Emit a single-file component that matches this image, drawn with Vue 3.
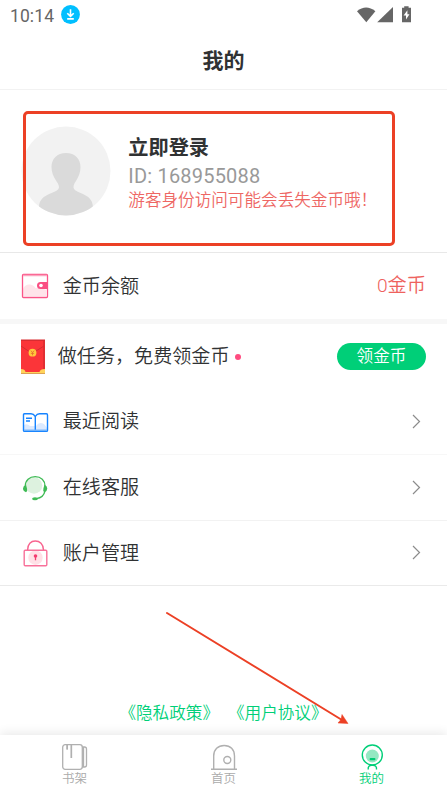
<script setup>
const menu = [
  { id: 'read', label: '最近阅读' },
  { id: 'service', label: '在线客服' },
  { id: 'account', label: '账户管理' },
]
</script>

<template>
  <div class="screen">
    <div class="status">
      <span class="time">10:14</span>
      <svg class="download" width="19" height="19" viewBox="0 0 19 19">
        <circle cx="9.5" cy="9.5" r="9.4" fill="#00bfff" />
        <path d="M9.5 4.2v7M6.3 8.2l3.2 3.2 3.2-3.2M6.2 13.9h6.6" fill="none" stroke="#fff" stroke-width="1.6" />
      </svg>
      <svg class="signals" width="56" height="18" viewBox="0 0 56 18" fill="#666">
        <path d="M0 5.3Q9 -2.2 18.4 5.3L9.3 16.2Z" />
        <path d="M20.2 16.2L36 .9v15.3Z" />
        <path d="M45 1.700h2.200V.200h4.400v1.500h2.400v14.500h-9Z" />
        <path d="M50.4 4.2l-3.8 5.2h2.4v4l3.5-5.2h-2.1Z" fill="#fff" />
      </svg>
    </div>
    <header class="title">我的</header>

    <section class="profile">
      <svg class="avatar" width="90" height="90" viewBox="0 0 90 90">
        <defs><clipPath id="face"><circle cx="45" cy="45" r="44.5" /></clipPath></defs>
        <circle cx="45" cy="45" r="44.5" fill="#f2f2f2" />
        <path clip-path="url(#face)" fill="#dadada" d="M45 27C54 27 59.500 33 59.500 41C59.500 52 52.500 56 52.500 61C52.500 68 71.500 66 72 81V90H18V81C18.500 66 38 68 38 61C38 56 30.500 52 30.500 41C30.500 33 36 27 45 27Z" />
      </svg>
      <div class="who">
        <div class="name">立即登录</div>
        <div class="uid">ID: 168955088</div>
        <div class="warn">游客身份访问可能会丢失金币哦！</div>
      </div>
      <div class="highlight"></div>
    </section>

    <section class="row balance">
      <svg class="icon" width="28" height="26" viewBox="0 0 28 26">
        <path d="M2 22V16Q4 11 9 11.500Q13 12 14.500 15Q20 14 25 17V23H2Z" fill="#ffe4ea" />
        <rect x="1.500" y="1.500" width="25" height="23" rx="1" fill="none" stroke="#fb5588" stroke-width="1.300" />
        <path d="M2 2.500H26" stroke="#fba5bf" stroke-width="1.500" />
        <path d="M26.500 9H19.500a3.500 3.500 0 0 0 0 7H26.500Z" fill="#fa4f83" />
        <circle cx="20" cy="12.500" r="1.800" fill="#fff" />
      </svg>
      <span class="label">金币余额</span>
      <span class="amount">0金币</span>
    </section>

    <section class="row task">
      <svg class="packet" width="26" height="36" viewBox="0 0 26 36">
        <rect x="1" y="1" width="24" height="33.500" rx="1" fill="#fb3539" />
        <path d="M24 1v33M1 1.200h24" stroke="#d92c30" stroke-width="1.500" />
        <path d="M1 7L12 14.500L24 7" fill="none" stroke="#d62b32" stroke-width="1" />
        <circle cx="12.500" cy="13.700" r="3.900" fill="#ffc83c" />
        <path d="M10.900 11.700l1.600 1.900 1.600-1.900M12.500 13.500v2.800M10.900 14.400h3.200" fill="none" stroke="#e46b2f" stroke-width=".8" />
        <path d="M1 30Q5 30 5.500 33H19.500Q20 30 25 30V35H1Z" fill="#ffd35b" />
        <path d="M1 34.500H25" stroke="#dca253" />
      </svg>
      <span class="label">做任务，免费领金币</span><i class="dot"></i>
      <button class="claim">领金币</button>
    </section>

    <section v-for="item in menu" :key="item.id" class="row menu-row" :class="item.id">
      <svg v-if="item.id === 'read'" class="icon" width="28" height="28" viewBox="0 0 28 28">
        <path d="M3 17Q6 15 9 18H15Q18 13 23 16L26 20V22H3Z" fill="#dceaff" />
        <path d="M14.300 8.500Q12.500 5.700 10 5.700H3.500Q2.500 5.700 2.500 7V22.500Q2.500 23.300 3.500 23.300H25.500Q26.500 23.300 26.500 22.500V7Q26.500 5.700 25.500 5.700H18.500Q16 5.700 14.300 8.500V22" fill="none" stroke="#1683ff" stroke-width="1.400" />
        <path d="M3 22.300H26" stroke="#70b3fb" stroke-width="1.500" />
        <path d="M5 10.200h6M5 13h4" stroke="#1683ff" stroke-width="1.500" />
      </svg>
      <svg v-else-if="item.id === 'service'" class="icon" width="28" height="28" viewBox="0 0 28 28">
        <circle cx="13" cy="11.500" r="8.300" fill="#ddf2df" />
        <path d="M4.300 12C4.300 6.500 8.400 2.700 14.200 2.700S24 6.500 24 12M24 17C23 21.500 20 24 15.500 24.700" fill="none" stroke="#3fbb55" stroke-width="1.300" />
        <path d="M5 10.700Q2 12 2 14.500Q2 17.200 5 18.200Q6.800 17 6 14.500ZM23.400 10.700Q26.300 12 26.300 14.500Q26.300 17.200 23.400 18.200Q21.600 17 22.400 14.500Z" fill="#3fbb55" />
        <ellipse cx="14" cy="24.700" rx="2.900" ry="1.500" fill="#3fbb55" />
      </svg>
      <svg v-else class="icon" width="28" height="28" viewBox="0 0 28 28">
        <circle cx="14.500" cy="18.700" r="7.200" fill="#ffe1e7" />
        <rect x="3.200" y="11.300" width="22.600" height="15.500" rx="1" fill="none" stroke="#f8719a" stroke-width="1.400" />
        <path d="M6.600 11C6.600 5 10 2 14.300 2S22.500 5 22.500 11" fill="none" stroke="#f8648f" stroke-width="1.400" />
        <circle cx="14.500" cy="17" r="1.800" fill="#f43c70" /><path d="M14.500 17v4.300" stroke="#f43c70" stroke-width="1.300" />
      </svg>
      <span class="label">{{ item.label }}</span>
      <svg class="chevron" width="9" height="16" viewBox="0 0 9 16"><path d="M1 1L7.500 7.500L1 14" fill="none" stroke="#8c8c8c" stroke-width="1.200" /></svg>
    </section>

    <div class="links"><span>《隐私政策》</span><span>《用户协议》</span></div>

    <nav class="tabs">
      <div class="tab">
        <svg width="28" height="28" viewBox="0 0 28 28" fill="none" stroke="#b0b0b0" stroke-width="1.300">
          <rect x="1.700" y="1.700" width="19.600" height="24.600" rx="2.500" />
          <path d="M21.300 4H23.500Q25.500 4 25.500 6V22Q25.500 24 23.500 24H21.300M22.500 4v20M6 2v4.500M10.200 2v13" />
          <path d="M6.300 2v4.500M10.500 2v13" />
        </svg>
        <span>书架</span>
      </div>
      <div class="tab">
        <svg width="28" height="28" viewBox="0 0 28 28" fill="none" stroke="#b0b0b0" stroke-width="1.400">
          <path d="M3.700 26V13C3.700 6.500 8 2.500 14.200 2.500S24.500 6.500 24.500 13V26M1 26.200H27" />
          <circle cx="17.300" cy="17" r="3.500" />
        </svg>
        <span>首页</span>
      </div>
      <div class="tab active">
        <svg width="28" height="28" viewBox="0 0 28 28" fill="none" stroke="#00cf78" stroke-width="1.400">
          <circle cx="14.300" cy="12" r="10" />
          <circle cx="14.300" cy="13" r="6.500" fill="#94e8c2" stroke="none" />
          <rect x="11.700" y="15" width="5.700" height="2.200" rx=".8" fill="#00c974" stroke="none" />
          <path d="M10.200 26.500Q9.700 22 14.300 22.300Q19 22 18.500 26.500" />
        </svg>
        <span>我的</span>
      </div>
    </nav>

    <svg class="pointer" width="184" height="114" viewBox="0 0 184 114">
      <path d="M2 2L177 109" stroke="#ec4025" stroke-width="2" stroke-linecap="round" />
      <path d="M183 112.500L173 112L176 108.500L177 103.500Z" fill="#ec4025" stroke="#ec4025" stroke-width=".5" />
    </svg>
  </div>
</template>

<style>
body { margin: 0; background: #fff; }
</style>

<style scoped>
.screen {
  position: relative;
  box-sizing: border-box;
  width: 447px;
  height: 795px;
  display: flex;
  flex-direction: column;
  overflow: hidden;
  background: #fff;
  color: #303233;
  font-family: Roboto, "Noto Sans CJK SC", sans-serif;
  font-weight: 350;
}
.screen svg { display: block; flex: none; }
.status { height: 30px; display: flex; align-items: center; padding: 0 34px 0 10px; color: #666; }
.time { font-size: 17.500px; font-weight: 400; letter-spacing: .1px; padding-top: 1px; }
.download { margin-left: 7px; margin-top: -1px; }
.signals { margin-left: auto; }
.title { box-sizing: border-box; height: 60px; padding-top: 2px; display: flex; align-items: center; justify-content: center; font-size: 21px; font-weight: 700; border-bottom: 1px solid #f2f2f2; line-height: 30px; }
.profile { position: relative; height: 162px; display: flex; border-bottom: 1px solid #e8e8e8; }
.avatar { margin: 36px 0 0 20.500px; }
.who { margin: 44px 0 0 17.800px; white-space: nowrap; }
.name { height: 28px; line-height: 28px; font-size: 20.200px; font-weight: 700; }
.uid { height: 28px; line-height: 28px; font-size: 20px; font-weight: 400; letter-spacing: .2px; color: #999; }
.warn { height: 22px; line-height: 22px; font-size: 16.600px; color: #ee6764; }
.highlight { position: absolute; left: 23px; top: 21px; box-sizing: border-box; width: 372px; height: 135px; border: 3px solid #ec4025; border-radius: 5px; }
.row { display: flex; align-items: center; box-sizing: border-box; padding: 0 21px; white-space: nowrap; }
.label { font-size: 19.100px; line-height: 28px; padding-top: 1px; }
.icon + .label { margin-left: 13.700px; }
.balance { height: 71px; border-bottom: 5px solid #f7f7f7; }
.amount { margin-left: auto; font-size: 19.200px; line-height: 28px; color: #ee625d; }
.task { height: 65px; padding-left: 20px; }
.packet + .label { margin-left: 11.700px; padding-top: 1px; }
.dot { width: 6px; height: 6px; border-radius: 50%; background: #ff4c80; margin-left: 5.500px; }
.claim { margin-left: auto; width: 89px; height: 27px; border: 0; border-radius: 14px; padding: 0; background: #00cf78; color: #fff; font-family: inherit; font-weight: 350; font-size: 16.600px; line-height: 26px; }
.menu-row { height: 66px; border-bottom: 1px solid #f2f2f2; }
.read { border-bottom-color: #f7f7f7; }
.account { height: 65px; border-bottom-color: #eaeaea; }
.chevron { margin-left: auto; margin-right: 5px; }
.links { display: flex; justify-content: center; gap: 9px; margin-top: 116px; font-size: 16.600px; line-height: 24px; color: #00cf78; }
.tabs { margin-top: auto; height: 60px; display: grid; grid-template-columns: repeat(3, 1fr); background: #fff; box-shadow: 0 -2px 10px rgba(0, 0, 0, .09); }
.tab { display: flex; flex-direction: column; align-items: center; padding-top: 8px; color: #aaa; font-size: 12.500px; line-height: 15px; }
.active { color: #00cf78; padding-right: 2px; }
.pointer { position: absolute; left: 165px; top: 611px; }
</style>
